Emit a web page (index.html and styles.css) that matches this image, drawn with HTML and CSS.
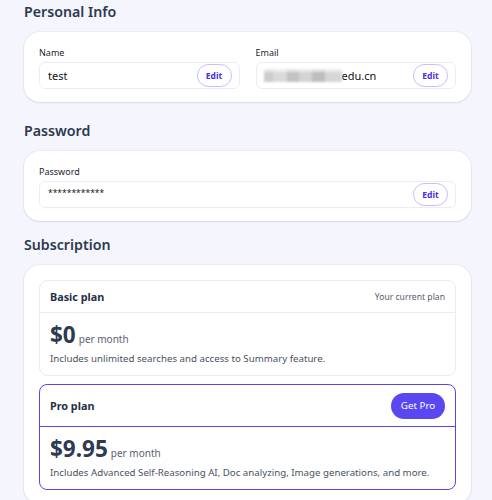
FILE: index.html
```html
<!DOCTYPE html>
<html>
<head>
<meta charset="utf-8">
<link rel="stylesheet" href="styles.css">
</head>
<body>
<main class="page">
  <section class="section section-personal">
    <h2 class="section-title">Personal Info</h2>
    <div class="card">
      <div class="fields two">
        <div class="field">
          <label class="field-label">Name</label>
          <div class="input">
            <span class="input-value">test</span>
            <button class="edit-btn">Edit</button>
          </div>
        </div>
        <div class="field">
          <label class="field-label">Email</label>
          <div class="input">
            <span class="input-value"><span class="blur"></span>edu.cn</span>
            <button class="edit-btn">Edit</button>
          </div>
        </div>
      </div>
    </div>
  </section>

  <section class="section">
    <h2 class="section-title">Password</h2>
    <div class="card">
      <div class="field">
        <label class="field-label">Password</label>
        <div class="input">
          <span class="input-value pw">************</span>
          <button class="edit-btn">Edit</button>
        </div>
      </div>
    </div>
  </section>

  <section class="section">
    <h2 class="section-title">Subscription</h2>
    <div class="card plans">
      <div class="plan">
        <div class="plan-head">
          <span class="plan-name">Basic plan</span>
          <span class="plan-current">Your current plan</span>
        </div>
        <div class="plan-body">
          <div class="price"><span class="amount">$0</span><span class="per">per month</span></div>
          <p class="plan-desc">Includes unlimited searches and access to Summary feature.</p>
        </div>
      </div>
      <div class="plan pro">
        <div class="plan-head">
          <span class="plan-name">Pro plan</span>
          <button class="get-pro">Get Pro</button>
        </div>
        <div class="plan-body">
          <div class="price"><span class="amount">$9.95</span><span class="per">per month</span></div>
          <p class="plan-desc">Includes Advanced Self-Reasoning AI, Doc analyzing, Image generations, and more.</p>
        </div>
      </div>
    </div>
  </section>
</main>
</body>
</html>
```

FILE: styles.css
```css
* { box-sizing: border-box; }
html, body { margin: 0; padding: 0; }
body {
  background: #f5f5fe;
  font-family: "Noto Sans", "Open Sans", sans-serif;
  color: #2d3748;
}
.page {
  padding: 0 21px 0 24px;
}
.section { margin-bottom: 12px; }
.section-personal { margin-bottom: 17px; }
.section-title {
  margin: 0 0 8px;
  font-size: 14.2px;
  line-height: 24px;
  font-weight: 600;
  color: #2d3a4f;
}
.card {
  background: #fff;
  border-radius: 16px;
  padding: 13px 15px;
  box-shadow: 0 1px 2px rgba(90, 90, 150, 0.14), 0 0 0 1px rgba(230, 230, 245, 0.6);
}
.fields.two {
  display: grid;
  grid-template-columns: 1fr 1fr;
  gap: 16px;
}
.field { display: flex; flex-direction: column; }
.field-label {
  font-size: 9px;
  line-height: 15px;
  color: #1f2430;
  margin-bottom: 2px;
}
.input {
  display: flex;
  align-items: center;
  justify-content: space-between;
  height: 27px;
  border: 1px solid #ececf6;
  border-radius: 6px;
  padding: 0 7px 0 8px;
}
.input-value {
  font-size: 11px;
  color: #111;
  display: flex;
  align-items: center;
}
.input-value.pw { font-size: 8.5px; letter-spacing: 0; margin-top: -5px; }
.blur {
  display: inline-block;
  width: 78px;
  height: 13px;
  margin-left: -1px;
  background:
    linear-gradient(180deg, rgba(255,255,255,0.55) 0 25%, rgba(255,255,255,0) 25% 100%),
    linear-gradient(90deg, #c8c8c8 0 12%, #d6d6d6 12% 30%, #bdbdbd 30% 45%, #cfcfcf 45% 62%, #b8b8b8 62% 78%, #d2d2d2 78% 100%);
  filter: blur(1px);
  opacity: 0.9;
}
.edit-btn {
  font-family: inherit;
  height: 23px;
  width: 35px;
  padding: 0;
  border: 1px solid #c9bdfb;
  border-radius: 12px;
  background: #fff;
  color: #4b2ee6;
  font-size: 8.5px;
  font-weight: 700;
}
.plans { padding: 15px 15px 14px; display: flex; flex-direction: column; gap: 8px; }
.plan {
  border: 1px solid #ebebf6;
  border-radius: 8px;
}
.plan.pro { border: 1.5px solid #5a45ea; }
.plan-head {
  display: flex;
  justify-content: space-between;
  align-items: center;
  height: 32px;
  padding: 0 10px;
  border-bottom: 1px solid #ebebf6;
}
.plan.pro .plan-head { height: 42px; border-bottom: 1.5px solid #5a45ea; }
.plan-name { font-size: 10.8px; font-weight: 700; color: #243044; }
.plan-current { font-size: 8.6px; color: #555d6b; }
.get-pro {
  font-family: inherit;
  border: none;
  background: #5b47ef;
  color: #fff;
  font-size: 9.8px;
  height: 26px;
  width: 54px;
  border-radius: 13px;
  padding: 0;
}
.plan-body { padding: 7px 10px 8px; }
.price { display: flex; align-items: baseline; }
.amount { font-size: 22.5px; font-weight: 700; color: #2d3a4f; line-height: 30px; }
.per { font-size: 10px; color: #5a6170; margin-left: 3px; }
.plan-desc { margin: 1px 0 0; font-size: 9.7px; color: #4a5260; line-height: 16px; }
```
